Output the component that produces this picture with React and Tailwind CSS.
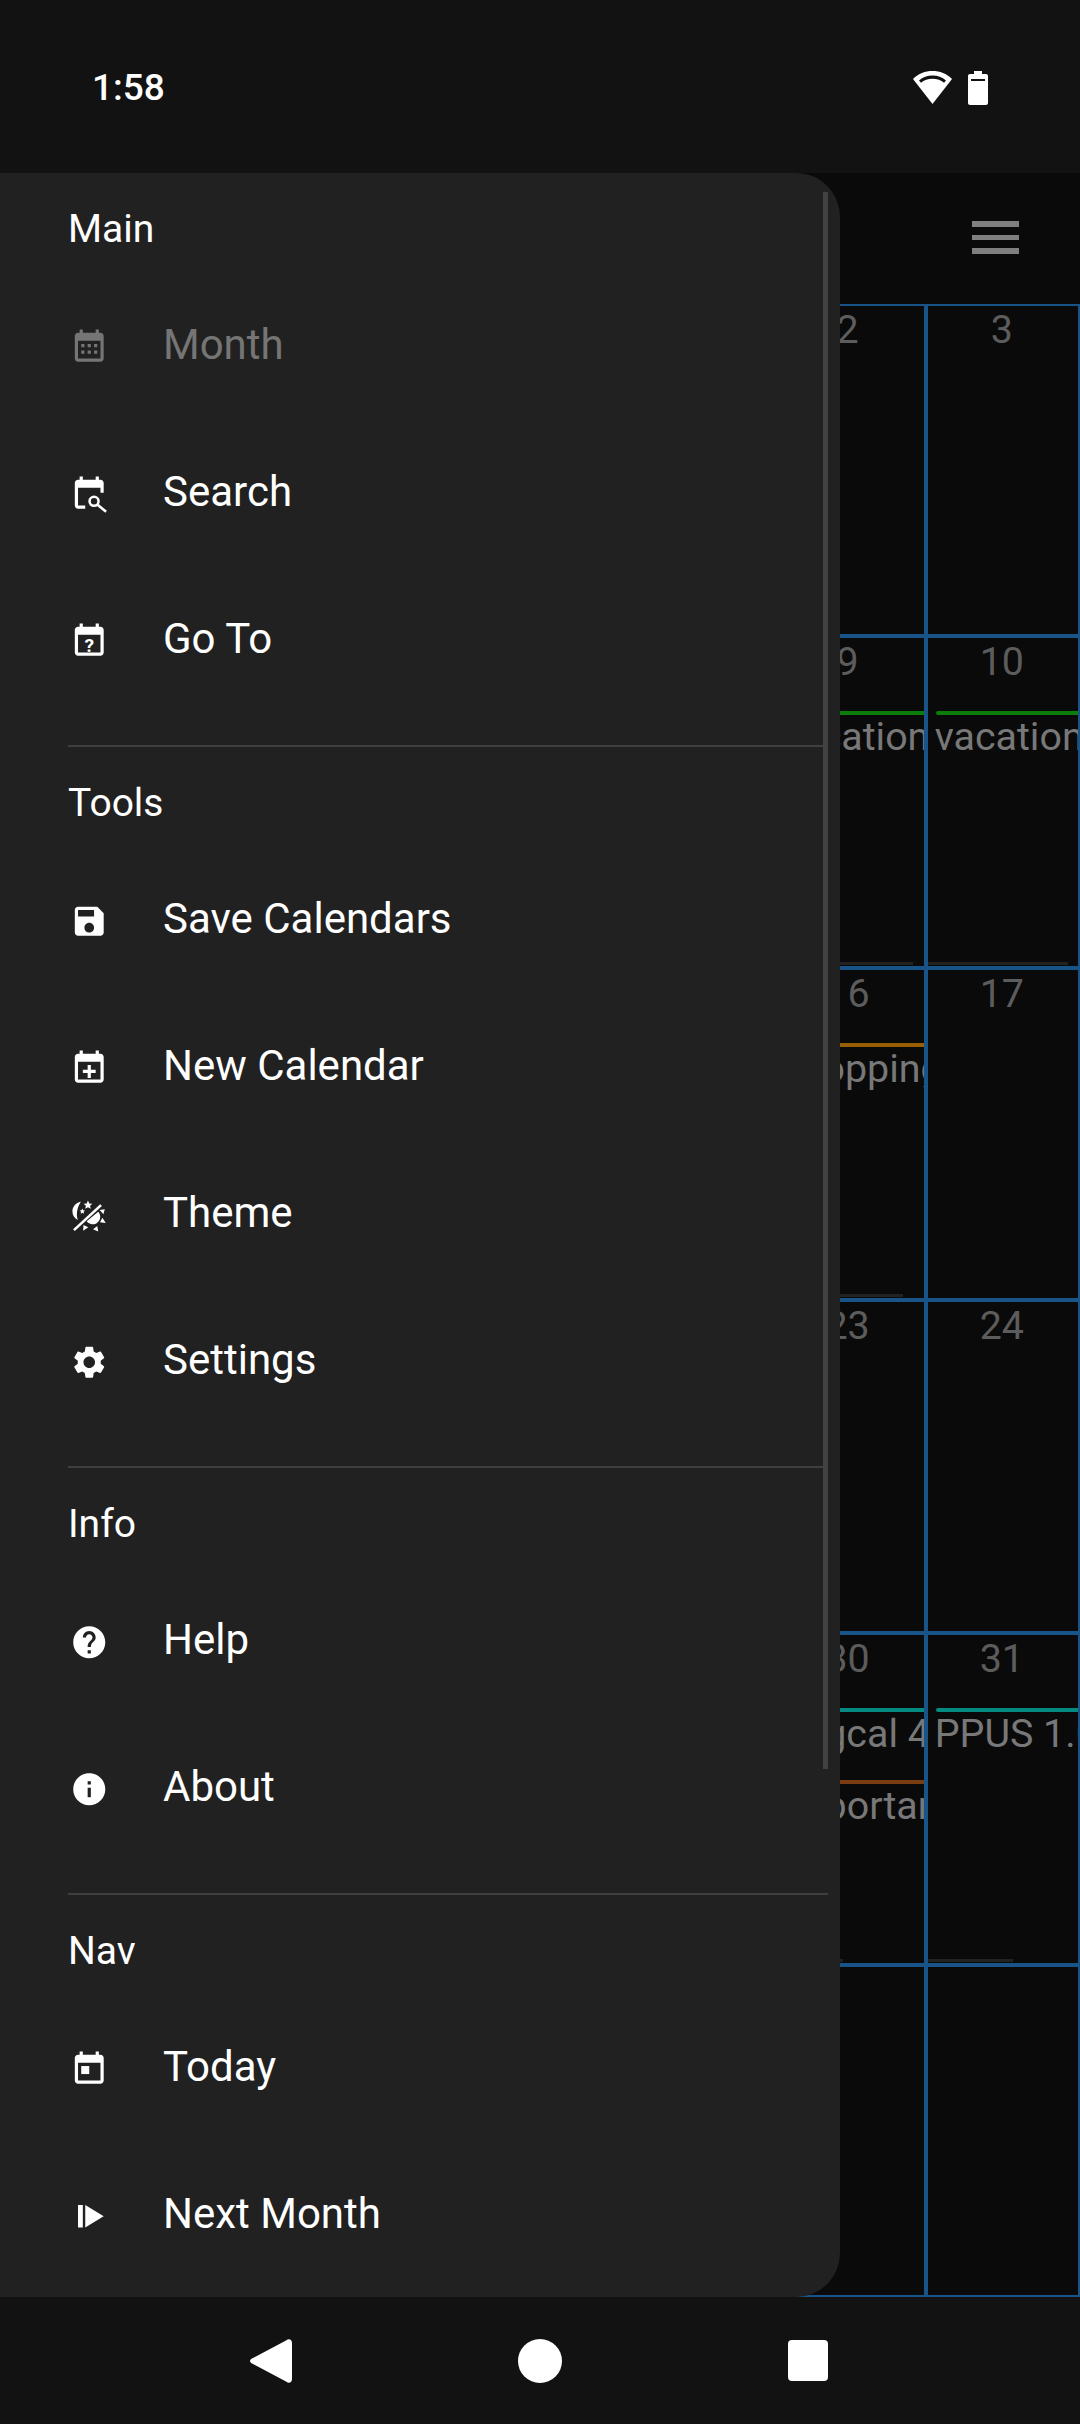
import { Fragment } from "react";

const CAL =
	"M19 3h-1V1h-2v2H8V1H6v2H5c-1.1 0-2 .9-2 2v14c0 1.1.9 2 2 2h14c1.1 0 2-.9 2-2V5c0-1.1-.9-2-2-2zm0 16H5V8h14v11z";

function Icon({ children }) {
	return (
		<svg viewBox="0 0 24 24" fill="currentColor" className="w-[38.5px] h-[38.5px] shrink-0 mt-[6px]">
			{children}
		</svg>
	);
}

const icons = {
	month: (
		<Icon>
			<path d="M19 3h-1V1h-2v2H8V1H6v2H5c-1.1 0-2 .9-2 2v14c0 1.1.9 2 2 2h14c1.1 0 2-.9 2-2V5c0-1.1-.9-2-2-2zm0 16H5V8h14v11z" />
			<path d="M7 10h2v2H7zM11 10h2v2h-2zM15 10h2v2h-2zM7 14h2v2H7zM11 14h2v2h-2zM15 14h2v2h-2z" />
		</Icon>
	),
	search: (
		<Icon>
			<path d="M19 3h-1V1h-2v2H8V1H6v2H5c-1.1 0-2 .9-2 2v14c0 1.1.9 2 2 2h4.500v-2H5V8h14v3h2V5c0-1.1-.9-2-2-2z" />
			<circle cx="15" cy="16.400" r="2.800" fill="none" stroke="currentColor" strokeWidth="1.600" />
			<path d="M17 18.400l5.500 4.500" fill="none" stroke="currentColor" strokeWidth="1.600" />
		</Icon>
	),
	goto: (
		<Icon>
			<path d={CAL} />
			<text x="12" y="18.400" textAnchor="middle" fontSize="12" fontWeight="700" fontFamily="Roboto, sans-serif">
				?
			</text>
		</Icon>
	),
	save: (
		<Icon>
			<path d="M17 3H5c-1.11 0-2 .9-2 2v14c0 1.1.89 2 2 2h14c1.1 0 2-.9 2-2V7l-4-4zm-5 16c-1.66 0-3-1.34-3-3s1.34-3 3-3 3 1.34 3 3-1.34 3-3 3zm3-10H5V5h10v4z" />
		</Icon>
	),
	add: (
		<Icon>
			<path d={CAL} />
			<path d="M11 10h2v3h3v2h-3v3h-2v-3H8v-2h3z" />
		</Icon>
	),
	theme: (
		<Icon>
			<path d="M3 21.800l-1.100-1.100L18.800 5.200l1.100 1.100z" />
			<path d="M6.800 3.400c-3.300.9-5.300 3.400-5.300 6.200 0 2.300 1.300 4.300 3.400 5.300C3.700 11.800 4.300 7.300 6.800 3.400z" />
			<path d="M11.200 2.800l.8 1.800 1.900.2-1.400 1.300.4 1.900-1.700-1-1.700 1 .4-1.900-1.400-1.300 1.900-.2zM7.700 7.800l.5 1.100 1.200.1-.9.8.3 1.200-1.100-.6-1.100.6.3-1.200-.9-.8 1.200-.1z" />
			<path d="M17.600 9.800c1.100 1.100 1.500 2.700 1.100 4.200-.6 2.500-3.100 4.100-5.600 3.500-1.100-.3-2-.9-2.700-1.700z" />
			<path d="M18.500 8.700l3.200-.4-.9 3.100zM20.200 13.600l2.100 3.200-3.600-.4zM17 18.700l.6 3.500-3.200-1.500zM11.400 19.500l-3.200 2.200.2-3.700z" />
		</Icon>
	),
	settings: (
		<Icon>
			<path d="M19.14 12.94c.04-.3.06-.61.06-.94 0-.32-.02-.64-.07-.94l2.03-1.58c.18-.14.23-.41.12-.61l-1.92-3.32c-.12-.22-.37-.29-.59-.22l-2.39.96c-.5-.38-1.03-.7-1.62-.94l-.36-2.54c-.04-.24-.24-.41-.48-.41h-3.84c-.24 0-.43.17-.47.41l-.36 2.54c-.59.24-1.13.57-1.62.94l-2.39-.96c-.22-.08-.47 0-.59.22L2.74 8.870c-.12.21-.08.47.12.61l2.03 1.58c-.05.3-.09.63-.09.94s.02.64.07.94l-2.03 1.58c-.18.14-.23.41-.12.61l1.92 3.32c.12.22.37.29.59.22l2.39-.96c.5.38 1.03.7 1.62.94l.36 2.54c.05.24.24.41.48.41h3.84c.24 0 .44-.17.47-.41l.36-2.54c.59-.24 1.13-.56 1.62-.94l2.39.96c.22.08.47 0 .59-.22l1.92-3.32c.12-.22.07-.47-.12-.61l-2.01-1.58zM12 15.6c-1.98 0-3.6-1.62-3.6-3.6s1.62-3.6 3.6-3.6 3.6 1.62 3.6 3.6-1.62 3.6-3.6 3.6z" />
		</Icon>
	),
	help: (
		<Icon>
			<path d="M12 2C6.48 2 2 6.48 2 12s4.48 10 10 10 10-4.48 10-10S17.52 2 12 2zm1 17h-2v-2h2v2zm2.07-7.75l-.9.92C13.45 12.9 13 13.5 13 15h-2v-.5c0-1.1.45-2.1 1.17-2.83l1.24-1.26c.37-.36.59-.86.59-1.41 0-1.1-.9-2-2-2s-2 .9-2 2H8c0-2.21 1.79-4 4-4s4 1.79 4 4c0 .88-.36 1.68-.93 2.25z" />
		</Icon>
	),
	info: (
		<Icon>
			<path d="M12 2C6.48 2 2 6.48 2 12s4.48 10 10 10 10-4.48 10-10S17.52 2 12 2zm1 15h-2v-6h2v6zm0-8h-2V7h2v2z" />
		</Icon>
	),
	today: (
		<Icon>
			<path d={CAL} />
			<path d="M7 10h5v5H7z" />
		</Icon>
	),
	next: (
		<Icon>
			<path d="M5 5h3v14H5zM9.500 5L21 12 9.500 19z" />
		</Icon>
	),
};

const sections = [
	{
		title: "Main",
		items: [
			{ label: "Month", icon: "month", disabled: true },
			{ label: "Search", icon: "search" },
			{ label: "Go To", icon: "goto" },
		],
	},
	{
		title: "Tools",
		items: [
			{ label: "Save Calendars", icon: "save" },
			{ label: "New Calendar", icon: "add" },
			{ label: "Theme", icon: "theme" },
			{ label: "Settings", icon: "settings" },
		],
	},
	{
		title: "Info",
		items: [
			{ label: "Help", icon: "help" },
			{ label: "About", icon: "info" },
		],
	},
	{
		title: "Nav",
		items: [
			{ label: "Today", icon: "today" },
			{ label: "Next Month", icon: "next" },
		],
	},
];

// day -> events shown in that cell, plus width of the faint bar at the bottom
const dayData = {
	9: { events: [{ text: "vacation", color: "bg-[#0a7d0a]" }], bar: 140 },
	10: { events: [{ text: "vacation", color: "bg-[#0a7d0a]" }], bar: 140 },
	16: { events: [{ text: "shopping", color: "bg-[#965f04]" }], bar: 130 },
	30: {
		events: [
			{ text: "bugcal 4", color: "bg-[#048a81]" },
			{ text: "important", color: "bg-[#7a3d12]" },
		],
		bar: 70,
	},
	31: { events: [{ text: "PPUS 1.0", color: "bg-[#048a81]" }], bar: 85 },
};

const cells = Array.from({ length: 42 }, (_, i) => {
	const day = i - 3;
	return day >= 1 && day <= 31 ? day : null;
});

function DayCell({ day }) {
	const data = dayData[day];
	return (
		<div className="flex flex-col min-w-0 overflow-hidden border-2 border-[#185488]">
			{day && (
				<div className="h-[73px] shrink-0 text-center text-[39.4px] leading-[46px] pt-[1px] pr-[2px] text-[#5c5c5c]">
					{day}
				</div>
			)}
			{data?.events.map((ev) => (
				<div key={ev.text} className="h-[72px] shrink-0 pl-[8px]">
					<div className={`h-[4px] ${ev.color} rounded-l-sm`} />
					<div className="-ml-[1px] text-[39.4px] leading-[44px] whitespace-nowrap text-[#787878]">{ev.text}</div>
				</div>
			))}
			{data && <div className="mt-auto h-[3px] bg-[#222222] mb-[1px]" style={{ width: data.bar }} />}
		</div>
	);
}

function Drawer() {
	return (
		<div className="absolute left-0 top-[173px] bottom-[127px] w-[840px] bg-[#212121] rounded-r-[44px] overflow-hidden pt-[15px]">
			{sections.map((section, idx) => (
				<Fragment key={section.title}>
					{idx > 0 && <div className="mt-[33px] mb-[15px] ml-[68px] w-[760px] h-[2px] bg-[#3f3f3f]" />}
					<div className="h-[83px] pl-[68px] flex items-center text-[39px] text-white">{section.title}</div>
					{section.items.map((item) => (
						<div
							key={item.label}
							className={`h-[147px] flex items-center pl-[70px] text-[42px] ${
								item.disabled ? "text-[#757575]" : "text-white"
							}`}
						>
							{icons[item.icon]}
							<span className="ml-[54.5px]">{item.label}</span>
						</div>
					))}
				</Fragment>
			))}
			{/* scrollbar */}
			<div className="absolute left-[823px] top-[19px] w-[5px] h-[1577px] bg-[#424242]" />
		</div>
	);
}

export default function App() {
	return (
		<div className="relative w-[1080px] h-[2424px] flex flex-col bg-[#0a0a0a] overflow-hidden font-['Roboto',sans-serif]">
			{/* status bar */}
			<div className="h-[173px] bg-[#121212] flex items-center justify-between pl-[92px] pr-[92px] pt-[3px]">
				<span className="text-[37px] font-medium text-white">1:58</span>
				<div className="flex items-center gap-[16px] text-white -mt-[1px]">
					<svg viewBox="0 0 39 33" className="w-[39px] h-[33px]" fill="currentColor">
						<path d="M19.5 0C12 0 5.500 2.500 0 8l19.500 25L39 8C33.500 2.500 27 0 19.500 0z" />
						<path d="M6 9.500C9.800 6.300 14.300 4.500 19.500 4.500S29.200 6.300 33 9.500l-2 2.200C28 9.300 24 7.800 19.500 7.800S11 9.300 8 11.700z" fill="#121212" />
					</svg>
					<svg viewBox="0 0 20 34" className="w-[20px] h-[34px]" fill="currentColor">
						<path d="M6 0h8v3h4c1.100 0 2 .9 2 2v27c0 1.100-.9 2-2 2H2c-1.100 0-2-.9-2-2V5c0-1.100.9-2 2-2h4z" />
						<path d="M3 8h14v2H3z" fill="#121212" />
					</svg>
				</div>
			</div>

			{/* toolbar */}
			<div className="h-[131px] flex justify-end pr-[61px] pt-[48px]">
				<div className="flex flex-col gap-[8px] w-[47px]">
					<div className="h-[5.5px] bg-[#7f7f7f]" />
					<div className="h-[5.5px] bg-[#7f7f7f]" />
					<div className="h-[5.5px] bg-[#7f7f7f]" />
				</div>
			</div>

			{/* month grid */}
			<div className="flex-1 grid grid-cols-7 grid-rows-6">
				{cells.map((day, i) => (
					<DayCell key={i} day={day} />
				))}
			</div>

			{/* navigation bar */}
			<div className="h-[127px] bg-[#121212] relative z-10 flex items-center justify-center gap-[226px] pr-[3px]">
				<svg viewBox="0 0 42 44" className="w-[42px] h-[44px]" fill="#fff">
					<path d="M36 1.500c3-2.500 6-1 6 2.500v36c0 3.500-3 5-6 2.500L2 24.500c-2.600-1.500-2.600-3.500 0-5z" />
				</svg>
				<div className="w-[44px] h-[44px] rounded-full bg-white" />
				<div className="w-[40px] h-[41px] rounded-[4px] bg-white" />
			</div>

			<Drawer />
		</div>
	);
}
